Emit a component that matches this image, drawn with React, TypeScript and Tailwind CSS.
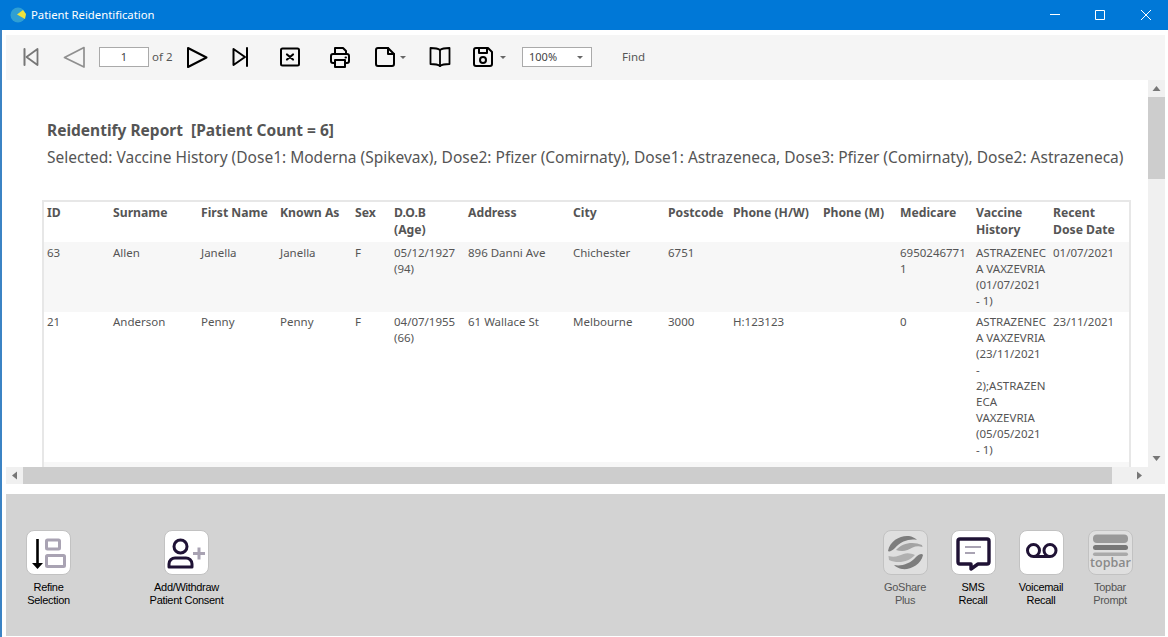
import type { ReactNode } from 'react';

const FONT = '[font-family:"Noto_Sans",sans-serif]';
const COLS = 'grid grid-cols-[66px_88px_79px_75px_39px_74px_105px_95px_65px_90px_77px_76px_77px_79px]';

const headers = [
  ['ID'],
  ['Surname'],
  ['First Name'],
  ['Known As'],
  ['Sex'],
  ['D.O.B', '(Age)'],
  ['Address'],
  ['City'],
  ['Postcode'],
  ['Phone (H/W)'],
  ['Phone (M)'],
  ['Medicare'],
  ['Vaccine', 'History'],
  ['Recent', 'Dose Date'],
];

const rows = [
  {
    style: 'bg-[#f7f7f7] py-[3px]',
    cells: [
      ['63'],
      ['Allen'],
      ['Janella'],
      ['Janella'],
      ['F'],
      ['05/12/1927', '(94)'],
      ['896 Danni Ave'],
      ['Chichester'],
      ['6751'],
      [],
      [],
      ['6950246771', '1'],
      ['ASTRAZENEC', 'A VAXZEVRIA', '(01/07/2021', '- 1)'],
      ['01/07/2021'],
    ],
  },
  {
    style: 'bg-white pt-[2px] pb-[4px]',
    cells: [
      ['21'],
      ['Anderson'],
      ['Penny'],
      ['Penny'],
      ['F'],
      ['04/07/1955', '(66)'],
      ['61 Wallace St'],
      ['Melbourne'],
      ['3000'],
      ['H:123123'],
      [],
      ['0'],
      ['ASTRAZENEC', 'A VAXZEVRIA', '(23/11/2021', '-', '2);ASTRAZEN', 'ECA', 'VAXZEVRIA', '(05/05/2021', '- 1)'],
      ['23/11/2021'],
    ],
  },
];

function ToolIcon({ className, children }: { className: string; children: ReactNode }) {
  return (
    <svg
      viewBox="0 0 24 24"
      fill="none"
      stroke="currentColor"
      strokeWidth="2"
      strokeLinejoin="round"
      strokeLinecap="round"
      className={`w-6 h-6 shrink-0 ${className}`}
    >
      {children}
    </svg>
  );
}

function Caret({ className }: { className: string }) {
  return (
    <svg viewBox="0 0 6 3" className={`w-[6px] h-[3px] shrink-0 ${className}`}>
      <path d="M0 0h6L3 3z" fill="#666" />
    </svg>
  );
}

function ScrollArrow({ d }: { d: string }) {
  return (
    <svg viewBox="0 0 17 17" className="w-[17px] h-[17px] shrink-0">
      <path d={d} fill="#777" />
    </svg>
  );
}

function PanelButton({
  width,
  label,
  disabled,
  className = '',
  children,
}: {
  width: string;
  label: string[];
  disabled?: boolean;
  className?: string;
  children: ReactNode;
}) {
  return (
    <div className={`flex flex-col items-center ${width} ${className}`}>
      <div
        className={`w-[45px] h-[45px] rounded-lg border border-[#c2c2c2] ${disabled ? 'bg-[#dfdfdf]' : 'bg-white'}`}
      >
        <svg viewBox="1 1 43 43" fill="none" className="w-[43px] h-[43px]">
          {children}
        </svg>
      </div>
      <div
        className={`mt-[6px] text-center text-[11px] leading-[13px] tracking-[-0.3px] whitespace-nowrap [font-family:"Liberation_Sans",sans-serif] ${disabled ? 'text-[#555]' : 'text-black'}`}
      >
        {label.map((l) => (
          <div key={l}>{l}</div>
        ))}
      </div>
    </div>
  );
}

export default function App() {
  return (
    <div className={`w-[1168px] h-[637px] flex flex-col bg-white overflow-hidden ${FONT}`}>
      {/* title bar */}
      <div className="h-[30px] shrink-0 bg-[#0078d7] flex items-center text-white">
        <svg viewBox="0 0 16 16" className="w-4 h-4 ml-[10px] shrink-0">
          <circle cx="8" cy="8" r="7.5" fill="#2f9fd3" />
          <path d="M7 7.5 13 3l3 4-1 5z" fill="#efe23c" />
        </svg>
        <span className="ml-[5px] text-[11.3px]">Patient Reidentification</span>
        <svg viewBox="0 0 10 10" className="w-[10px] h-[10px] ml-auto" stroke="white" strokeWidth="1">
          <path d="M0 4.5h10" />
        </svg>
        <svg viewBox="0 0 10 10" className="w-[10px] h-[10px] ml-[35px]" stroke="white" strokeWidth="1" fill="none">
          <path d="M.5.5h9v9h-9z" />
        </svg>
        <svg viewBox="0 0 10 10" className="w-[10px] h-[10px] ml-[36px] mr-[17px]" stroke="white" strokeWidth="1">
          <path d="M0 0l10 10M10 0 0 10" />
        </svg>
      </div>

      <div className="flex-1 flex flex-col border-l-2 border-[#3b83c4] pl-[4px] pr-[3px] pt-[5px]">
        {/* report toolbar */}
        <div className="h-[45px] shrink-0 bg-[#f5f5f5] flex items-center pl-[13px] pb-[1px] text-black">
          <ToolIcon className="text-[#777]">
            <path d="M5.5 4v16" />
            <path d="M18.5 4 7.5 12l11 8z" strokeWidth="1.8" />
          </ToolIcon>
          <ToolIcon className="ml-[19px] text-[#8f8f8f]">
            <path d="M22 2.500 2.500 12.500 22 22z" strokeWidth="1.700" />
          </ToolIcon>
          <div className="ml-[13px] w-[50px] h-5 shrink-0 bg-white border border-[#aaa] text-center text-[11px] leading-[18px] text-[#444]">
            1
          </div>
          <span className="ml-[3px] w-[21px] shrink-0 whitespace-nowrap text-[11.5px] text-[#555]">of 2</span>
          <ToolIcon className="ml-[12px]">
            <path d="M3 3 21.5 12.5 3 22z" />
          </ToolIcon>
          <ToolIcon className="ml-[19px]">
            <path d="M5.5 4 17 12 5.5 20z" />
            <path d="M19 3v18" />
          </ToolIcon>
          <ToolIcon className="ml-[26px]">
            <rect x="3" y="3.5" width="18" height="17" rx="1.5" />
            <path d="M9 9.5l6 5M15 9.5l-6 5" strokeWidth="2.2" />
          </ToolIcon>
          <ToolIcon className="ml-[26px]">
            <path d="M7 9V3h8l3 3v3" />
            <path d="M7 18H5a2 2 0 0 1-2-2v-5a2 2 0 0 1 2-2h14a2 2 0 0 1 2 2v5a2 2 0 0 1-2 2h-2" />
            <path d="M7 15h10v7H7z" />
            <path d="M17.5 12.5h.5" />
          </ToolIcon>
          <ToolIcon className="ml-[21px]">
            <path d="M5 3h10l6 6v10a2 2 0 0 1-2 2H5a2 2 0 0 1-2-2V5a2 2 0 0 1 2-2z" />
            <path d="M15 3v6h6" />
          </ToolIcon>
          <Caret className="ml-[3px]" />
          <ToolIcon className="ml-[22px]">
            <path d="M12 5C9.5 3 6 3 2.5 3v16c3.500 0 7 0 9.500 2 2.500-2 6-2 9.500-2V3C18 3 14.500 3 12 5z" strokeWidth="1.8" />
            <path d="M12 5v16" strokeWidth="1.8" />
          </ToolIcon>
          <ToolIcon className="ml-[19px]">
            <path d="M5 3h12l4 4v12a2 2 0 0 1-2 2H5a2 2 0 0 1-2-2V5a2 2 0 0 1 2-2z" />
            <path d="M8 3v5h8V3" />
            <circle cx="12" cy="15" r="3" />
          </ToolIcon>
          <Caret className="ml-[5px]" />
          <div className="ml-[16px] w-[70px] h-5 shrink-0 bg-white border border-[#aaa] flex items-center pl-[6px] pr-[8px] text-[11px] text-[#444]">
            <span>100%</span>
            <Caret className="ml-auto" />
          </div>
          <span className="ml-[30px] text-[11.5px] text-[#555]">Find</span>
        </div>

        {/* report viewport */}
        <div className="h-[387px] shrink-0 flex">
          <div className="flex-1 min-w-0 overflow-hidden pl-[36px] pt-[40px] text-[#555]">
            <div className="ml-[5px] text-[15.5px] leading-5 font-bold whitespace-pre">
              Reidentify Report  [Patient Count = 6]
            </div>
            <div className="ml-[5px] mt-[7px] text-[15.5px] leading-5 whitespace-nowrap">
              Selected: Vaccine History (Dose1: Moderna (Spikevax), Dose2: Pfizer (Comirnaty), Dose1: Astrazeneca, Dose3: Pfizer (Comirnaty), Dose2: Astrazeneca)
            </div>
            <div className="mt-[33px] w-[1089px] border-2 border-[#e7e7e7]">
              <div className={`${COLS} bg-white pt-[2px] pb-[4px] text-[12.2px] leading-[17px] font-bold`}>
                {headers.map((h, i) => (
                  <div key={i} className="px-[3px] whitespace-nowrap">
                    {h.map((l) => (
                      <div key={l}>{l}</div>
                    ))}
                  </div>
                ))}
              </div>
              {rows.map((row) => (
                <div key={row.cells[0][0]} className={`${COLS} ${row.style} text-[11.5px] leading-4`}>
                  {row.cells.map((c, i) => (
                    <div key={i} className="px-[3px] whitespace-nowrap">
                      {c.map((l) => (
                        <div key={l}>{l}</div>
                      ))}
                    </div>
                  ))}
                </div>
              ))}
              <div className="h-5 bg-[#f7f7f7]" />
            </div>
          </div>
          <div className="w-[17px] shrink-0 bg-[#f0f0f0] flex flex-col">
            <ScrollArrow d="M8.500 6 12.500 11h-8z" />
            <div className="h-[82px] bg-[#cdcdcd]" />
            <div className="flex-1" />
            <ScrollArrow d="M8.500 11 12.500 6h-8z" />
          </div>
        </div>

        {/* horizontal scrollbar */}
        <div className="h-[17px] shrink-0 bg-[#f0f0f0] flex">
          <ScrollArrow d="M6 8.500 11 4.500v8z" />
          <div className="w-[1089px] bg-[#cdcdcd]" />
          <div className="w-[19px]" />
          <ScrollArrow d="M11 8.500 6 4.500v8z" />
        </div>

        <div className="h-[10px] shrink-0" />

        {/* action panel */}
        <div className="h-[142px] shrink-0 bg-[#d3d3d3] flex pt-[36px] pr-[21px]">
          <PanelButton width="w-[85px]" label={['Refine', 'Selection']}>
            <path d="M11.500 9v26" stroke="#000" strokeWidth="2.600" />
            <path d="M6 33h11l-5.500 6z" fill="#000" />
            <rect x="20.500" y="10" width="13" height="9" rx="1" stroke="#a9a3b3" strokeWidth="3" />
            <rect x="20.500" y="25.500" width="18" height="11" rx="1" stroke="#a9a3b3" strokeWidth="3" />
          </PanelButton>
          <PanelButton width="w-[85px]" className="ml-[53px]" label={['Add/Withdraw', 'Patient Consent']}>
            <circle cx="16.500" cy="16.500" r="6.500" stroke="#1f1235" strokeWidth="3" />
            <path d="M5 37v-3c0-3.500 3-6 6-6h11c3 0 6 2.500 6 6v3z" stroke="#1f1235" strokeWidth="3" strokeLinejoin="round" />
            <path d="M29 23.500h12M35 17.500v12" stroke="#a9a3b3" strokeWidth="3" />
          </PanelButton>
          <PanelButton width="w-[68px]" className="ml-auto" disabled label={['GoShare', 'Plus']}>
            <path d="M5 21C7 10 18 5 26 6c3 .4 6 2 8 4-7-1.500-16 1-22 8-3 3-6 4-7 3z" fill="#7d7d7d" />
            <path d="M13 20c6-7 17-9 26-5l.5 2c-7-2-10 1-15 3-4 1.500-8 1-11.500 0z" fill="#a3a3a3" />
            <path d="M40 25C38 35 27 40 19 39c-3-.4-6-2-8-4 7 1.500 16-1 22-8 3-3 6-4 7-2z" fill="#7d7d7d" />
            <path d="M32 25c-6 7-17 9-26 5L5.500 26c7 2 10-.5 15-2 4-1.500 8-.5 11.500 1z" fill="#b0b0b0" />
          </PanelButton>
          <PanelButton width="w-[68px]" label={['SMS', 'Recall']}>
            <path d="M9 9h27a2 2 0 0 1 2 2v21a2 2 0 0 1-2 2H27l-7 5v-5H9a2 2 0 0 1-2-2V11a2 2 0 0 1 2-2z" stroke="#1f1235" strokeWidth="3.400" strokeLinejoin="round" />
            <path d="M14 17h16M14 23h10" stroke="#a9a3b3" strokeWidth="2" />
          </PanelButton>
          <PanelButton width="w-[68px]" label={['Voicemail', 'Recall']}>
            <circle cx="14.500" cy="20.500" r="6" stroke="#1f1235" strokeWidth="3" />
            <circle cx="31" cy="20.500" r="6" stroke="#1f1235" strokeWidth="3" />
            <path d="M14.500 26.500H31" stroke="#1f1235" strokeWidth="3" />
          </PanelButton>
          <PanelButton width="w-[68px]" className="ml-px" disabled label={['Topbar', 'Prompt']}>
            <rect x="5" y="4.500" width="35" height="8.500" rx="4" fill="#999" />
            <rect x="5" y="15" width="35" height="5" rx="2.500" fill="#777" />
            <rect x="5" y="22.500" width="35" height="3.500" rx="1.700" fill="#aaa" />
            <text x="22.500" y="37" textAnchor="middle" fontSize="12.500" fontWeight="600" fill="#8a8a8a" fontFamily="Open Sans, sans-serif">
              topbar
            </text>
          </PanelButton>
        </div>
      </div>
    </div>
  );
}
